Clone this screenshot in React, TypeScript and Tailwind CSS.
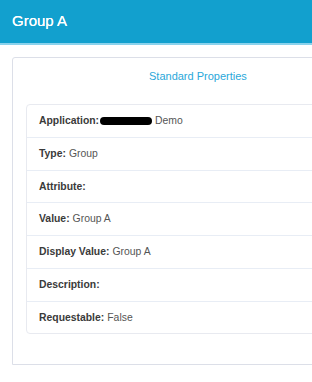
import React from "react";

const rows: { label: string; value?: string; redact?: boolean; h: string }[] = [
  { label: "Application:", value: "Demo", redact: true, h: "h-[33px]" },
  { label: "Type:", value: "Group", h: "h-[33px]" },
  { label: "Attribute:", h: "h-[32px]" },
  { label: "Value:", value: "Group A", h: "h-[33px]" },
  { label: "Display Value:", value: "Group A", h: "h-[33px]" },
  { label: "Description:", h: "h-[33px]" },
  { label: "Requestable:", value: "False", h: "h-[31px]" },
];

export default function App() {
  return (
    <div
      className="w-[312px] h-[382px] bg-white overflow-hidden"
      style={{ fontFamily: "'Liberation Sans', Arial, sans-serif" }}
    >
      <div className="h-[45px] bg-[#12a0ce] flex items-center pl-[12px] border-b-[2px] border-[#8ad2ec]">
        <span className="text-white text-[15px] font-medium [text-shadow:0_0_0.4px_#fff]">Group A</span>
      </div>
      <div className="pl-[12px] pt-[12px]">
        <div className="w-[320px] h-[308px] border border-[#dcdfe8] rounded-tl-[3px] pl-[13px]">
          <div className="h-[36px] flex items-center pl-[123px]">
            <span className="text-[11px] text-[#2aa8da]">Standard Properties</span>
          </div>
          <div className="mt-[10px] border border-[#e8eaf0] rounded-[4px] w-[300px]">
            {rows.map((r, i) => (
              <div
                key={r.label}
                className={`flex items-center pl-[12px] text-[10.4px] ${r.h} ${i < rows.length - 1 ? "border-b border-[#e8edf5]" : ""}`}
              >
                <span className="font-bold text-[#3a3a3a]">{r.label}</span>
                {r.redact && (
                  <span className="inline-block w-[52px] h-[8px] bg-black rounded-full ml-[1px]" />
                )}
                {r.value && <span className="text-[#555] ml-[3px]">{r.value}</span>}
              </div>
            ))}
          </div>
        </div>
      </div>
    </div>
  );
}
